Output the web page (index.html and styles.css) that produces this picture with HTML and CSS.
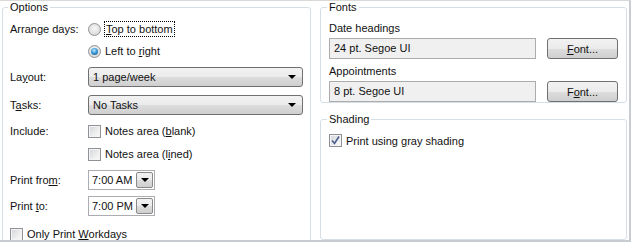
FILE: index.html
```html
<!DOCTYPE html>
<html lang="en">

<head>
    <meta charset="UTF-8">
    <title>Print Options</title>
    <link rel="stylesheet" href="styles.css">
</head>

<body>
    <div class="page">
        <fieldset class="group options">
            <legend>Options</legend>
            <div class="opt-grid">
                <span class="lbl">Arrange days:</span>
                <div class="choice"><span class="radio"></span><span class="focus"><u>T</u>op to bottom</span></div>

                <span></span>
                <div class="choice"><span class="radio on"></span><span>Left to <u>r</u>ight</span></div>

                <span class="lbl">La<u>y</u>out:</span>
                <div class="combo">1 page/week</div>

                <span class="lbl">T<u>a</u>sks:</span>
                <div class="combo">No Tasks</div>

                <span class="lbl">Include:</span>
                <div class="choice"><span class="check"></span><span>Notes area (<u>b</u>lank)</span></div>

                <span></span>
                <div class="choice"><span class="check"></span><span>Notes area (l<u>i</u>ned)</span></div>

                <span class="lbl">Print fro<u>m</u>:</span>
                <div class="time"><span>7:00 AM</span><span class="drop"></span></div>

                <span class="lbl">Print <u>t</u>o:</span>
                <div class="time"><span>7:00 PM</span><span class="drop"></span></div>

                <div class="choice wide"><span class="check"></span><span>Only Print <u>W</u>orkdays</span></div>
            </div>
        </fieldset>

        <div class="side">
            <fieldset class="group fonts">
                <legend>Fonts</legend>
                <div class="font-grid">
                    <span class="cap">Date headings</span>
                    <div class="field">24 pt. Segoe UI</div>
                    <button class="btn"><u>F</u>ont...</button>

                    <span class="cap">Appointments</span>
                    <div class="field">8 pt. Segoe UI</div>
                    <button class="btn">F<u>o</u>nt...</button>
                </div>
            </fieldset>

            <fieldset class="group shading">
                <legend>Shading</legend>
                <div class="choice"><span class="check">
                    <svg width="9" height="9" viewBox="0 0 9 9"><path d="M1 4.5 L3.5 7.5 L8 0.5" fill="none" stroke="#4a5f8f" stroke-width="1.6"/></svg>
                </span><span>Print using <u>g</u>ray shading</span></div>
            </fieldset>
        </div>
    </div>
</body>

</html>
```

FILE: styles.css
```css
body {
    margin: 0;
    font-family: "Liberation Sans", Arial, sans-serif;
    font-size: 11px;
    color: #111111;
    background: #ffffff;
}

.page {
    width: 631px;
    height: 242px;
    box-sizing: border-box;
    border-top: 1px solid #d9d9d9;
    border-right: 2px solid #c9cdd1;
    border-bottom: 2px solid #c9cdd1;
    display: flex;
    overflow: hidden;
}

u {
    text-decoration: underline;
    text-underline-offset: 1px;
}

.group {
    margin: 0;
    border: 1px solid #d5dfe5;
    border-radius: 3px;
    min-width: 0;
}

.group legend {
    padding: 0 2px;
    margin-left: -2px;
    line-height: 12px;
}

.options {
    margin-left: 2px;
    width: 309px;
    height: 280px;
    box-sizing: border-box;
    padding: 5px 7px 0 7px;
}

.opt-grid {
    display: grid;
    grid-template-columns: 78px 1fr;
    grid-template-rows: 22px 22px 30px 25px 28px 18px 34px 18px 38px;
    align-items: center;
}

.lbl {
    white-space: nowrap;
}

.choice {
    display: flex;
    align-items: center;
    white-space: nowrap;
}

.wide {
    grid-column: 1 / 3;
}

.focus {
    border: 1px dotted #000;
    padding: 0 1px;
    margin-left: -1px;
    line-height: 14px;
}

.radio {
    width: 13px;
    height: 13px;
    box-sizing: border-box;
    border-radius: 50%;
    border: 1px solid #8f9296;
    background: radial-gradient(circle at 50% 40%, #f8f8f8 0%, #e2e2e2 55%, #cfcfcf 100%);
    margin-right: 4px;
    flex: none;
    display: flex;
    align-items: center;
    justify-content: center;
}

.radio.on::after {
    content: "";
    width: 7px;
    height: 7px;
    border-radius: 50%;
    background: radial-gradient(circle at 45% 35%, #bfe9ff 0%, #3a9ad8 45%, #14527f 100%);
}

.check {
    width: 13px;
    height: 13px;
    box-sizing: border-box;
    border: 1px solid #8f9296;
    background: linear-gradient(135deg, #d2d4d8 0%, #eeeeee 60%, #fafafa 100%);
    box-shadow: inset 0 0 0 1px #f4f4f4;
    margin-right: 4px;
    flex: none;
    display: flex;
    align-items: center;
    justify-content: center;
}

.combo {
    height: 20px;
    box-sizing: border-box;
    border: 1px solid #707070;
    border-radius: 3px;
    background: linear-gradient(#f2f2f2 0%, #ebebeb 50%, #dddddd 51%, #cfcfcf 100%);
    padding-left: 4px;
    line-height: 18px;
    position: relative;
}

.combo::after {
    content: "";
    position: absolute;
    right: 6px;
    top: 7px;
    border-left: 4px solid transparent;
    border-right: 4px solid transparent;
    border-top: 4px solid #000;
}

.time {
    width: 67px;
    height: 20px;
    box-sizing: border-box;
    border: 1px solid #abadb3;
    background: #fff;
    padding-left: 3px;
    line-height: 18px;
    white-space: nowrap;
    display: flex;
    justify-content: space-between;
}

.drop {
    width: 17px;
    height: 16px;
    margin: 1px 1px 0 0;
    box-sizing: border-box;
    border: 1px solid #8a8a8a;
    border-radius: 2px;
    background: linear-gradient(#f2f2f2 0%, #ebebeb 50%, #dddddd 51%, #cfcfcf 100%);
    position: relative;
    flex: none;
}

.drop::after {
    content: "";
    position: absolute;
    left: 4px;
    top: 5px;
    border-left: 4px solid transparent;
    border-right: 4px solid transparent;
    border-top: 4px solid #000;
}

.side {
    margin-left: 9px;
    width: 307px;
    display: flex;
    flex-direction: column;
}

.fonts {
    height: 107px;
    box-sizing: border-box;
    padding: 8px 7px 0 8px;
}

.font-grid {
    display: grid;
    grid-template-columns: 207px 71px;
    column-gap: 11px;
    align-items: center;
}

.cap {
    grid-column: 1 / 3;
    line-height: 14px;
    margin-bottom: 2px;
}

.cap + .field + .btn + .cap {
    margin-top: 5px;
}

.field {
    height: 21px;
    box-sizing: border-box;
    border: 1px solid #acacac;
    background: #f0f0f0;
    padding-left: 4px;
    line-height: 19px;
}

.btn {
    height: 21px;
    margin-top: 1px;
    font: inherit;
    color: inherit;
    border: 1px solid #707070;
    border-radius: 3px;
    background: linear-gradient(#f2f2f2 0%, #ebebeb 50%, #dddddd 51%, #cfcfcf 100%);
    padding: 0;
}

.shading {
    margin-top: 10px;
    height: 200px;
    box-sizing: border-box;
    padding: 9px 7px 0 8px;
}
```
